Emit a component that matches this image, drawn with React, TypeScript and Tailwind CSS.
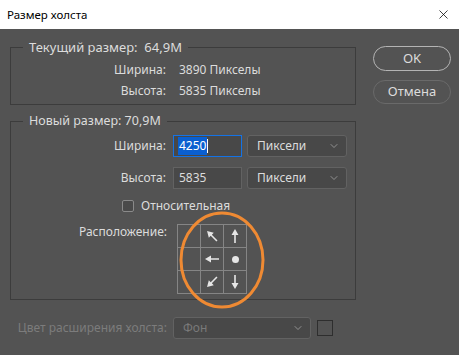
import { X, ChevronDown } from "lucide-react";

const font = { fontFamily: '"Noto Sans", "Open Sans", sans-serif' };

type Arrow = "ul" | "up" | "left" | "dot" | "dl" | "down" | null;

const cells: Arrow[] = [null, "ul", "up", null, "left", "dot", null, "dl", "down"];

const ArrowGlyph = ({ kind }: { kind: Arrow }) => {
  if (!kind) return null;
  if (kind === "dot") return <div className="size-[7px] rounded-full bg-[#e6e6e6]" />;
  const rot: Record<string, number> = { up: 0, ul: -45, left: -90, dl: -135, down: 180 };
  return (
    <svg width="16" height="16" viewBox="0 0 16 16" style={{ transform: `rotate(${rot[kind]}deg)` }}>
      <path d="M8 1 L11.5 7 L8.8 7 L8.8 15 L7.2 15 L7.2 7 L4.5 7 Z" fill="#e6e6e6" />
    </svg>
  );
};

const Select = ({ label, className = "" }: { label: string; className?: string }) => (
  <div
    className={
      "flex h-[22px] items-center justify-between rounded-[3px] border border-[#626262] bg-[#484848] pl-[9px] pr-[6px] text-[12px] text-[#dcdcdc] " +
      className
    }
  >
    <span>{label}</span>
    <ChevronDown className="size-[12px] text-[#a8a8a8]" strokeWidth={1.5} />
  </div>
);

export default function App() {
  return (
    <div className="h-[355px] w-[459px] overflow-hidden bg-[#535353] text-[12px] text-[#dcdcdc]" style={font}>
      <div className="flex h-[29px] items-center justify-between bg-white pl-[7px] pr-[8px] text-[11.5px] text-black">
        <span>Размер холста</span>
        <X className="size-[15px]" strokeWidth={1.2} />
      </div>

      <div className="relative flex">
        <div className="w-[356px] pl-[10px]">
          <fieldset className="mt-[11px] h-[65px] border border-[#3c3c3c] pl-[12px]">
            <legend className="px-[6px] text-[13px] leading-[14px]">Текущий размер:&nbsp; 64,9M</legend>
            <div className="mt-[8px] flex flex-col gap-[6px]">
              <div className="flex h-[15px] items-center">
                <span className="w-[143px] text-right">Ширина:</span>
                <span className="ml-[13px]">3890 Пикселы</span>
              </div>
              <div className="flex h-[15px] items-center">
                <span className="w-[143px] text-right">Высота:</span>
                <span className="ml-[13px]">5835 Пикселы</span>
              </div>
            </div>
          </fieldset>

          <fieldset className="mt-[9px] h-[186px] border border-[#3c3c3c] pl-[12px]">
            <legend className="px-[6px] text-[12.5px] leading-[14px]">Новый размер: 70,9M</legend>
            <div className="mt-[7px] flex h-[22px] items-center">
              <span className="w-[143px] text-right">Ширина:</span>
              <div className="ml-[7px] flex h-[22px] w-[69px] items-center border border-[#1473e6] bg-[#484848] pl-[4px]">
                <span className="bg-[#0a5fd0] px-[1px] text-white">4250</span>
                <span className="h-[14px] w-px bg-white" />
              </div>
              <Select label="Пиксели" className="ml-[5px] w-[100px]" />
            </div>
            <div className="mt-[10px] flex h-[22px] items-center">
              <span className="w-[143px] text-right">Высота:</span>
              <div className="ml-[7px] flex h-[22px] w-[69px] items-center border border-[#626262] bg-[#484848] pl-[5px]">
                5835
              </div>
              <Select label="Пиксели" className="ml-[5px] w-[100px]" />
            </div>
            <div className="mt-[10px] flex h-[13px] items-center pl-[99px]">
              <div className="size-[12px] rounded-[2px] border border-[#8a8a8a] bg-[#4a4a4a]" />
              <span className="ml-[7px]">Относительная</span>
            </div>
            <div className="mt-[12px] flex items-start">
              <span className="mt-[1px] w-[144px] text-right leading-[14px]">Расположение:</span>
              <div className="ml-[10px] grid grid-cols-[repeat(3,23px)] grid-rows-[repeat(3,23px)] border-l border-t border-[#858585]">
                {cells.map((c, i) => (
                  <div key={i} className="flex items-center justify-center border-b border-r border-[#858585]">
                    <ArrowGlyph kind={c} />
                  </div>
                ))}
              </div>
            </div>
          </fieldset>

          <div className="mt-[17px] flex h-[22px] items-center">
            <span className="w-[157px] text-right text-[#7c7c7c]">Цвет расширения холста:</span>
            <Select label="Фон" className="ml-[6px] w-[138px] border-[#5c5c5c] bg-[#4e4e4e] !text-[#7a7a7a]" />
            <div className="ml-[6px] h-[16px] w-[16px] border border-[#2e2e2e]" />
          </div>
        </div>

        <div className="ml-[17px] mt-[17px] flex flex-col gap-[9px]">
          <div className="flex h-[25px] w-[78px] items-center justify-center rounded-full border border-[#b4b4b4] text-[13px]">
            OK
          </div>
          <div className="flex h-[24px] w-[78px] items-center justify-center rounded-full border border-[#6a6a6a] text-[13px]">
            Отмена
          </div>
        </div>

        <svg className="pointer-events-none absolute left-[178px] top-[181px]" width="88" height="100" viewBox="0 0 88 100">
          <ellipse cx="44" cy="50" rx="41" ry="47" fill="none" stroke="#ef8a33" strokeWidth="3" />
        </svg>
      </div>
    </div>
  );
}
